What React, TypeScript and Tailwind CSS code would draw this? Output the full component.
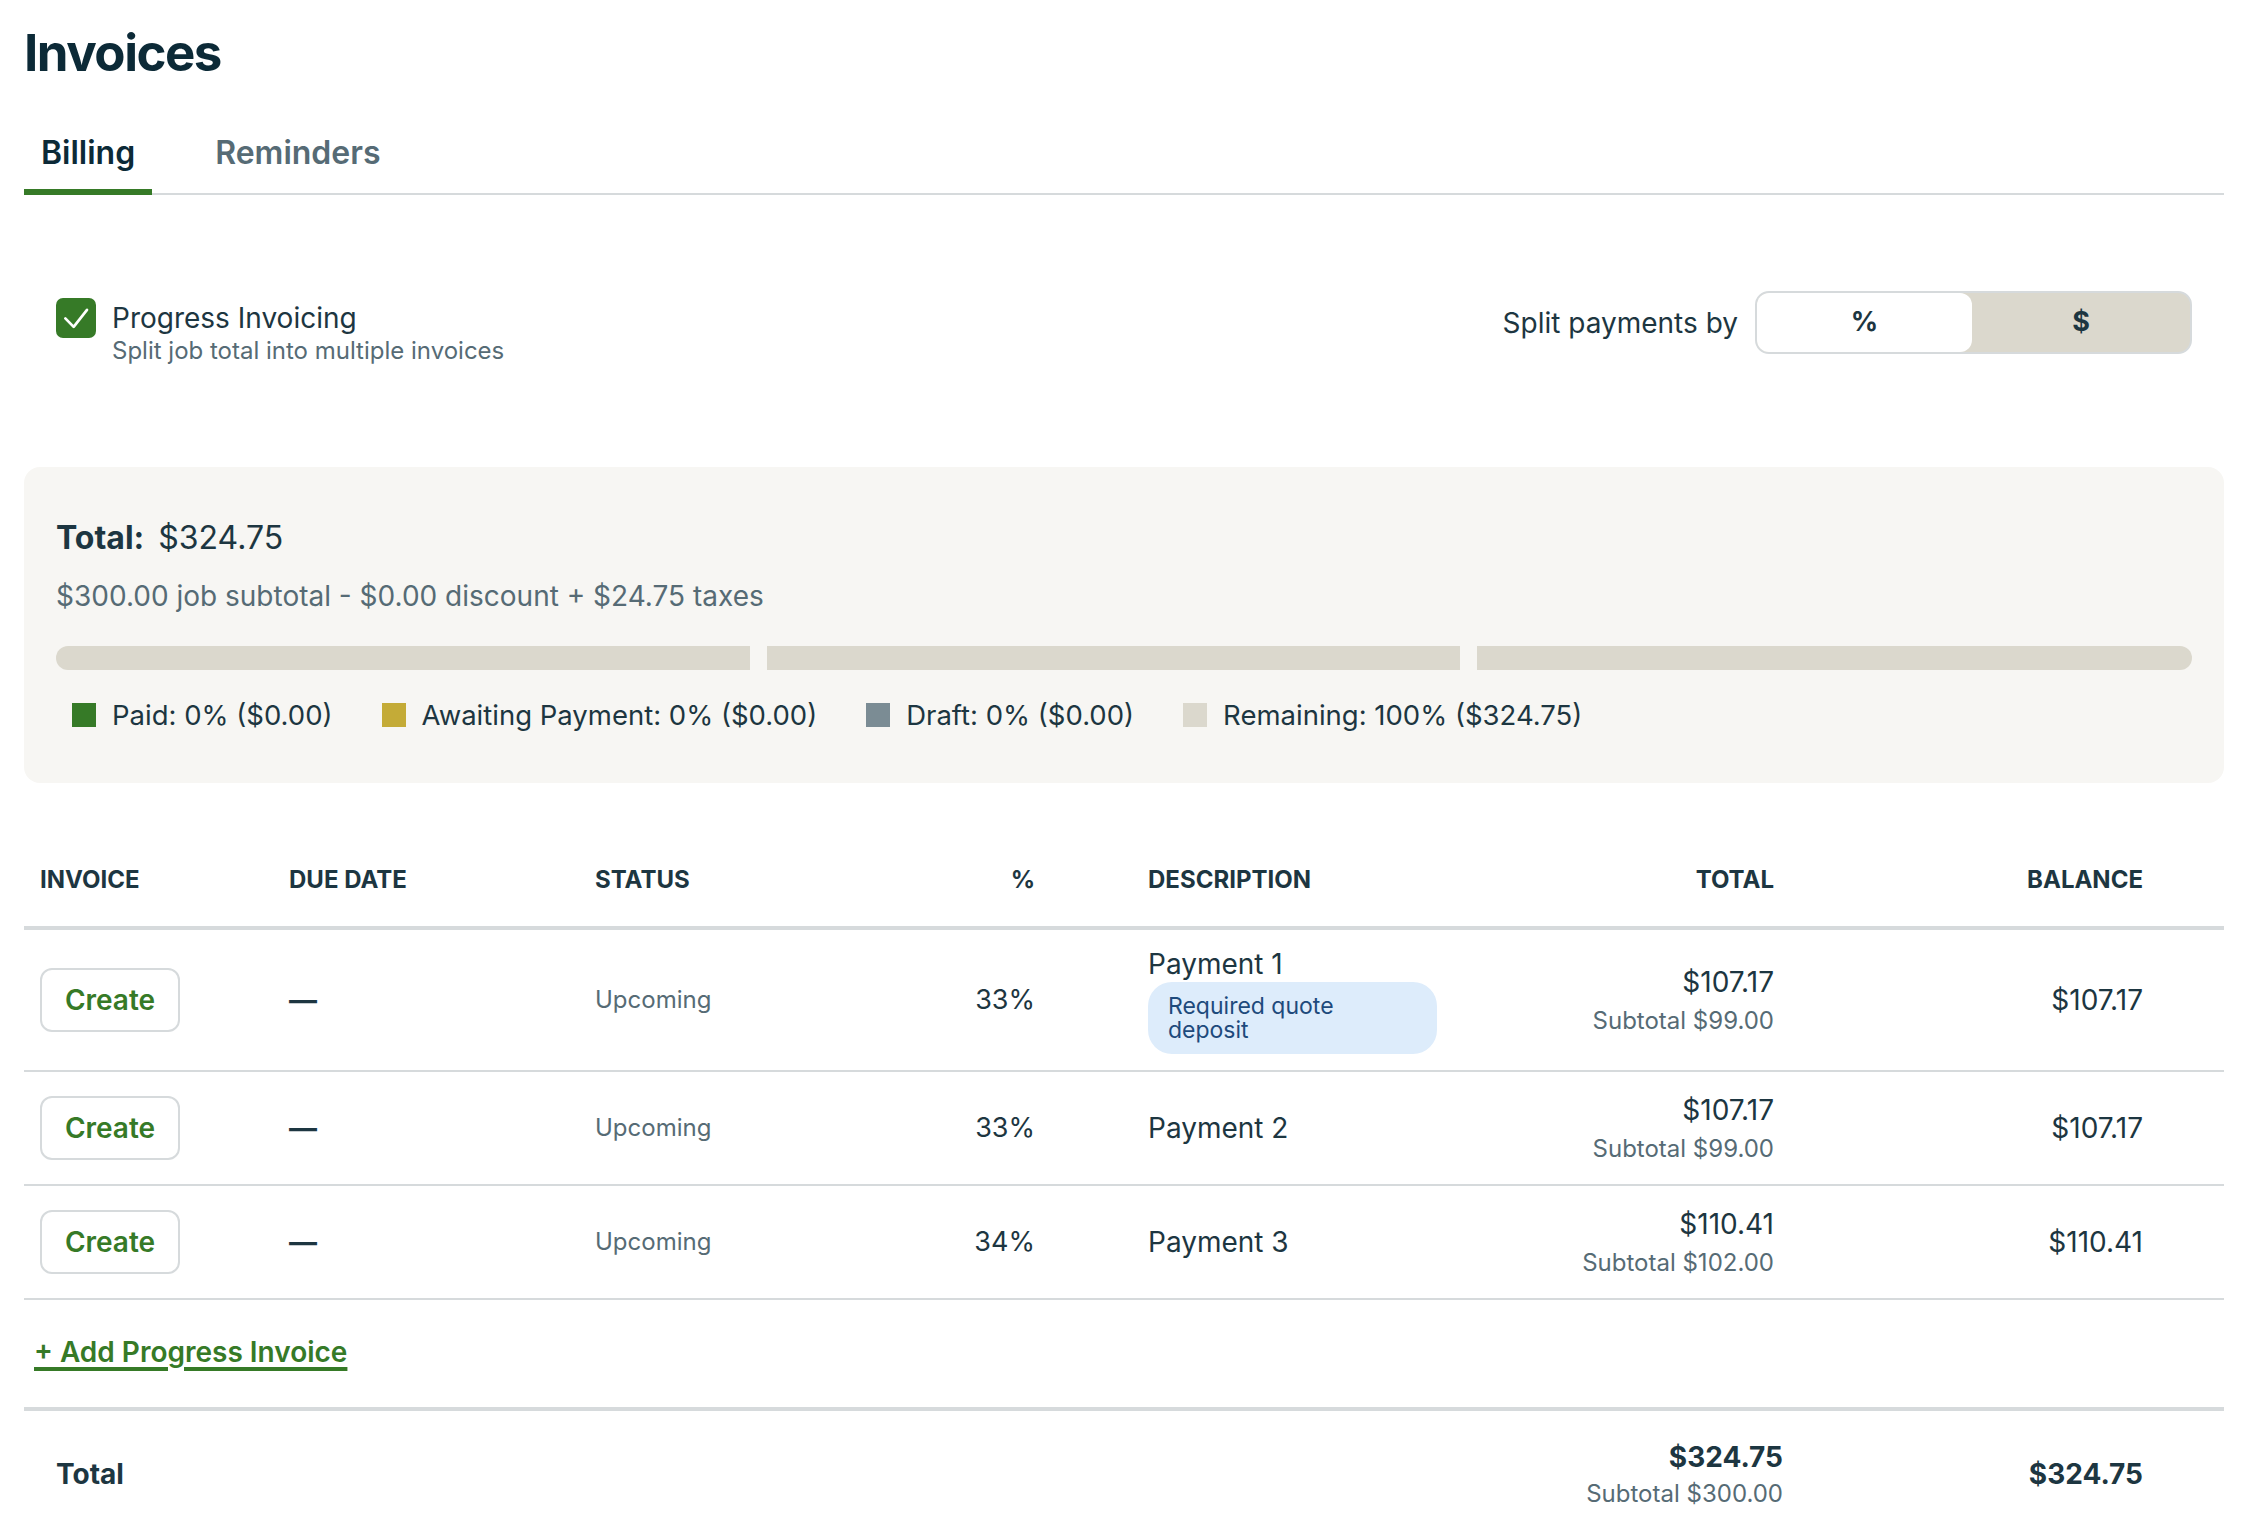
import React from "react";

const GRID =
  "grid grid-cols-[249px_306px_311px_242px_318px_340px_369px_65px]";

const rows = [
  { pct: "33%", name: "Payment 1", deposit: true, total: "$107.17", subtotal: "$99.00", balance: "$107.17" },
  { pct: "33%", name: "Payment 2", deposit: false, total: "$107.17", subtotal: "$99.00", balance: "$107.17" },
  { pct: "34%", name: "Payment 3", deposit: false, total: "$110.41", subtotal: "$102.00", balance: "$110.41" },
];

const legend = [
  { label: "Paid: 0% ($0.00)", color: "bg-[#367a27]" },
  { label: "Awaiting Payment: 0% ($0.00)", color: "bg-[#c4ab37]" },
  { label: "Draft: 0% ($0.00)", color: "bg-[#7b8c94]" },
  { label: "Remaining: 100% ($324.75)", color: "bg-[#dbd8cd]" },
];

export default function App() {
  return (
    <div className="min-h-screen bg-white font-['Inter',sans-serif] text-[#1d3641]">
      <div className="pl-[24px] pr-[28px]">
        {/* Page title */}
        <h1 className="pt-[22px] text-[51px] leading-[62px] font-bold tracking-[-1.5px] text-[#0c2a37]">
          Invoices
        </h1>

        {/* Tabs */}
        <div className="mt-[49px] flex gap-[46px] border-b-2 border-[#d6dadc]">
          <button className="-mb-[2px] border-b-[6px] border-[#367a27] px-[17px] pb-[16px] text-[32px] leading-[40px] font-semibold text-[#0c2a37]">
            Billing
          </button>
          <button className="-mb-[2px] border-b-[6px] border-transparent px-[17px] pb-[16px] text-[32px] leading-[40px] font-semibold text-[#566b75]">
            Reminders
          </button>
        </div>

        {/* Progress invoicing settings */}
        <div className="mt-[96px] flex items-start justify-between px-8">
          <div className="mt-[7px] flex gap-4">
            <div className="flex h-[40px] w-[40px] items-center justify-center rounded-[7px] bg-[#367a27]">
              <svg viewBox="0 0 24 24" className="h-[40px] w-[40px]" fill="none" stroke="white" strokeWidth="1.6" strokeLinecap="round" strokeLinejoin="round">
                <path d="M5.6 12.2l5 5.1 8-10.2" />
              </svg>
            </div>
            <div className="mt-[2px]">
              <p className="text-[28px] leading-[36px] text-[#1d3641]">Progress Invoicing</p>
              <p className="text-[24px] leading-[30px] text-[#566b75]">Split job total into multiple invoices</p>
            </div>
          </div>

          <div className="flex items-center gap-[17px]">
            <span className="text-[28px] leading-[36px] text-[#1d3641]">Split payments by</span>
            <div className="flex h-[63px] w-[437px] rounded-[14px] border-2 border-[#d6dadc] bg-[#dbd8cd]">
              <div className="flex w-[215px] items-center justify-center rounded-[12px] bg-white text-[27px] font-bold text-[#1d3641]">
                %
              </div>
              <div className="flex flex-1 items-center justify-center text-[27px] font-bold text-[#1d3641]">
                $
              </div>
            </div>
          </div>
        </div>

        {/* Summary card */}
        <div className="mt-[101px] rounded-[16px] bg-[#f7f6f3] px-8 pt-[53px] pb-[50px]">
          <p className="text-[32px] leading-[36px] text-[#1d3641]">
            <span className="font-bold">Total:</span>
            <span className="ml-[14px]">$324.75</span>
          </p>
          <p className="mt-[22px] text-[28px] leading-[36px] text-[#566b75]">
            $300.00 job subtotal - $0.00 discount + $24.75 taxes
          </p>

          <div className="mt-[32px] flex h-[24px] gap-[17px]">
            <div className="flex-[33_1_0%] rounded-l-full bg-[#dbd8cd]" />
            <div className="flex-[33_1_0%] bg-[#dbd8cd]" />
            <div className="flex-[34_1_0%] rounded-r-full bg-[#dbd8cd]" />
          </div>

          <div className="mt-[27px] flex items-center gap-[49px] pl-4">
            {legend.map((item) => (
              <div key={item.label} className="flex items-center gap-4">
                <span className={`h-[24px] w-[24px] ${item.color}`} />
                <span className="text-[27.5px] leading-[36px] text-[#1d3641]">{item.label}</span>
              </div>
            ))}
          </div>
        </div>

        {/* Invoice table */}
        <div className="mt-[83px]">
          <div className={`${GRID} border-b-4 border-[#d6dadc] pb-[32px] text-[24px] leading-[28px] font-bold uppercase text-[#1d3641]`}>
            <div className="px-4">Invoice</div>
            <div className="px-4">Due Date</div>
            <div className="px-4">Status</div>
            <div className="pr-[97px] text-right">%</div>
            <div className="px-4">Description</div>
            <div className="px-4 text-right">Total</div>
            <div className="px-4 text-right">Balance</div>
            <div />
          </div>

          {rows.map((row) => (
            <div key={row.name} className={`${GRID} items-center border-b-2 border-[#d6dadc] py-4`}>
              <div className="flex min-h-[80px] items-center px-4">
                <button className="h-[64px] w-[140px] rounded-[12px] border-2 border-[#d6dadc] bg-white text-[28px] font-semibold text-[#367a27]">
                  Create
                </button>
              </div>
              <div className="px-4 text-[28px] font-bold leading-[36px] text-[#1d3641]">—</div>
              <div className="px-4 text-[24px] leading-[32px] text-[#566b75]">Upcoming</div>
              <div className="pr-[97px] text-right text-[27px] leading-[36px]">{row.pct}</div>
              <div className="px-4">
                <p className="text-[28px] leading-[36px]">{row.name}</p>
                {row.deposit && (
                  <div className="flex h-[72px] w-[289px] items-center rounded-[24px] bg-[#ddecfb] px-5">
                    <span className="max-w-[200px] text-[23px] leading-[24px] text-[#1e4a7c]">
                      Required quote deposit
                    </span>
                  </div>
                )}
              </div>
              <div className="px-4 text-right">
                <p className="text-[28px] leading-[36px]">{row.total}</p>
                <p className="mt-[6px] text-[24px] leading-[30px] text-[#566b75]">Subtotal {row.subtotal}</p>
              </div>
              <div className="px-4 text-right text-[28px] leading-[36px]">{row.balance}</div>
              <div />
            </div>
          ))}

          {/* Add row */}
          <div className="pt-[34px] pb-[37px] pl-[10px]">
            <a className="text-[28px] leading-[36px] font-semibold text-[#367a27] underline decoration-[4px] underline-offset-[5px]">
              + Add Progress Invoice
            </a>
          </div>

          {/* Footer totals */}
          <div className="flex items-center border-t-4 border-[#d6dadc] pt-[28px] pb-[25px]">
            <div className="flex-1 pl-8 text-[28px] leading-[36px] font-bold">Total</div>
            <div className="w-[360px] text-right">
              <p className="text-[28px] leading-[36px] font-bold">$324.75</p>
              <p className="mt-[4px] text-[24px] leading-[30px] text-[#566b75]">Subtotal $300.00</p>
            </div>
            <div className="w-[360px] text-right text-[28px] leading-[36px] font-bold">$324.75</div>
            <div className="w-[81px]" />
          </div>
        </div>
      </div>
    </div>
  );
}
